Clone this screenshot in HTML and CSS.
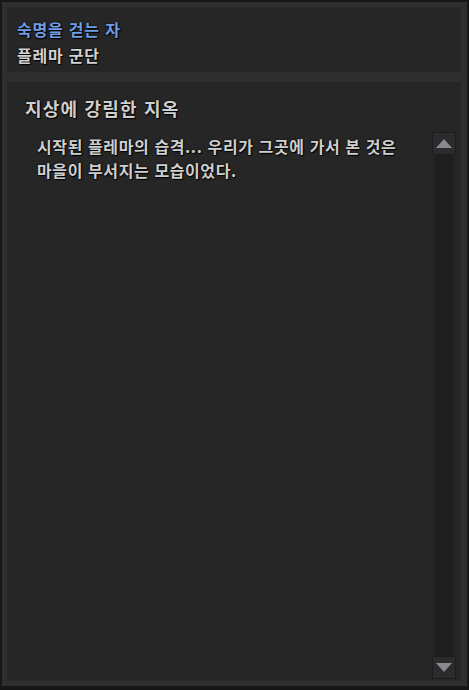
FILE: index.html
```html
<!DOCTYPE html>
<html lang="ko">
<head>
    <meta charset="UTF-8">
    <title>퀘스트 정보</title>
    <link rel="stylesheet" href="styles.css">
</head>
<body>

<div class="quest-frame">
    <!-- Quest header -->
    <div class="quest-header">
        <div class="quest-name">숙명을 걷는 자</div>
        <div class="quest-group">플레마 군단</div>
    </div>

    <!-- Quest story -->
    <div class="quest-story">
        <div class="story-title">지상에 강림한 지옥</div>
        <div class="story-body">
            <div class="story-text">시작된 플레마의 습격... 우리가 그곳에 가서 본 것은<br>마을이 부서지는 모습이었다.</div>
            <div class="scrollbar">
                <div class="scroll-button"><span class="arrow-up"></span></div>
                <div class="scroll-track"></div>
                <div class="scroll-button"><span class="arrow-down"></span></div>
            </div>
        </div>
    </div>
</div>

</body>
</html>
```

FILE: styles.css
```css
/* Page */
body {
    margin: 0;
    background-color: #141414;
    font-family: "Noto Sans CJK KR", "Noto Sans", sans-serif;
}

/* Outer frame */
.quest-frame {
    width: 469px;
    height: 690px;
    box-sizing: border-box;
    border-style: solid;
    border-color: #161616;
    border-width: 2px 2px 4px 2px;
    background-color: #2e2e2e;
    padding: 5px 6px 5px 5px;
    display: flex;
    flex-direction: column;
    gap: 10px;
}

/* Header box */
.quest-header {
    height: 65px;
    box-sizing: border-box;
    background-color: #262626;
    padding: 11px 10px 0 10px;
    font-weight: bold;
    text-shadow: 0 0 2px #000, 1px 1px 1px #000;
}

.quest-name {
    font-size: 16px;
    line-height: 22px;
    letter-spacing: 0.8px;
    color: #6f9de3;
}

.quest-group {
    font-size: 16px;
    line-height: 24px;
    letter-spacing: 0.8px;
    padding-top: 3px;
    color: #d2d2d2;
}

/* Story box */
.quest-story {
    flex: 1;
    background-color: #262626;
    display: flex;
    flex-direction: column;
    padding: 0 5px 2px 18px;
}

.story-title {
    font-size: 18px;
    font-weight: bold;
    line-height: 26px;
    letter-spacing: 1.2px;
    color: #cfcfcf;
    padding-top: 13px;
    height: 37px;
    text-shadow: 0 0 2px #000, 1px 1px 1px #000;
}

.story-body {
    flex: 1;
    display: flex;
}

.story-text {
    flex: 1;
    padding: 2px 0 0 12px;
    font-size: 16px;
    font-weight: bold;
    line-height: 24px;
    letter-spacing: 0.6px;
    color: #cfcfcf;
    text-shadow: 0 0 2px #000, 1px 1px 1px #000;
}

/* Scrollbar */
.scrollbar {
    width: 24px;
    display: flex;
    flex-direction: column;
    align-items: center;
}

.scroll-button {
    width: 24px;
    height: 23px;
    box-sizing: border-box;
    border: 1px solid #1c1c1c;
    background-color: #2b2b2d;
    display: flex;
    justify-content: center;
    align-items: center;
}

.scroll-track {
    flex: 1;
    width: 20px;
    background-color: #1f1f1f;
}

.arrow-up {
    width: 0;
    height: 0;
    border-left: 8px solid transparent;
    border-right: 8px solid transparent;
    border-bottom: 9px solid #8a8990;
}

.arrow-down {
    width: 0;
    height: 0;
    border-left: 8px solid transparent;
    border-right: 8px solid transparent;
    border-top: 9px solid #8a8990;
}
```
